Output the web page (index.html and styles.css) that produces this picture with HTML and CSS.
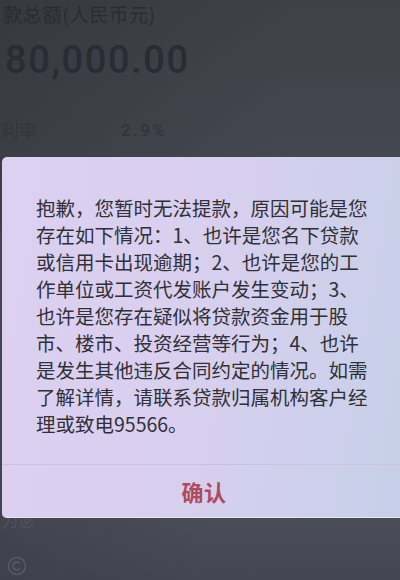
FILE: index.html
```html
<!DOCTYPE html>
<html lang="zh-CN">
<head>
<meta charset="utf-8">
<link rel="stylesheet" href="styles.css">
</head>
<body>
<div class="screen">
  <div class="loan">
    <div class="loan-label">款总额(人民币元)</div>
    <div class="loan-amount">80,000.00</div>
    <div class="loan-rate">
      <span class="rate-name">利率</span>
      <span class="rate-value">2.9%</span>
    </div>
  </div>
  <div class="below">
    <div class="below-text">为您</div>
    <div class="below-icon">
      <svg width="20" height="20" viewBox="0 0 20 20"><circle cx="10" cy="10" r="8.5" fill="none" stroke="#5a5c6b" stroke-width="1.4"/><path d="M13 7.4a4 4 0 1 0 0 5.2" fill="none" stroke="#5a5c6b" stroke-width="1.4"/></svg>
    </div>
  </div>

  <div class="dialog">
    <p class="dialog-msg">抱歉，您暂时无法提款，原因可能是您存在如下情况：1、也许是您名下贷款或信用卡出现逾期；2、也许是您的工作单位或工资代发账户发生变动；3、也许是您存在疑似将贷款资金用于股市、楼市、投资经营等行为；4、也许是发生其他违反合同约定的情况。如需了解详情，请联系贷款归属机构客户经理或致电95566。</p>
    <div class="dialog-foot">
      <span class="dialog-btn">确认</span>
    </div>
  </div>
</div>
</body>
</html>
```

FILE: styles.css
```css
html, body {
  margin: 0;
  padding: 0;
}
body {
  width: 400px;
  height: 580px;
  overflow: hidden;
  font-family: "Noto Sans CJK SC", "Noto Sans", sans-serif;
}
.screen {
  position: relative;
  width: 400px;
  height: 580px;
  overflow: hidden;
  background:
    linear-gradient(100deg, rgba(40,42,48,0.35) 0%, rgba(40,42,48,0) 60%),
    linear-gradient(180deg, #3e4148 0%, #474a53 40%, #555868 130px, #50525f 160px, #4a4c58 520px, #444653 580px);
  display: flex;
  flex-direction: column;
}
.loan {
  color: #2b2d34;
}
.loan-label {
  font-size: 19px;
  line-height: 24px;
  padding-top: 2px;
  padding-left: 3px;
  letter-spacing: 0.8px;
  color: #2a2c32;
}
.loan-amount {
  margin-top: 12px;
  font-family: Roboto, "Liberation Sans", sans-serif;
  font-weight: 500;
  font-size: 38px;
  line-height: 44px;
  letter-spacing: 1.6px;
  padding-left: 5px;
  color: #2a2c33;
}
.loan-rate {
  margin-top: 36px;
  display: flex;
  align-items: center;
  line-height: 24px;
  height: 24px;
}
.rate-name {
  font-size: 18px;
  width: 121px;
  padding-left: 1px;
  box-sizing: border-box;
  color: #33353d;
}
.rate-value {
  font-family: Roboto, "Liberation Sans", sans-serif;
  font-weight: 500;
  font-size: 17px;
  letter-spacing: 2.4px;
  color: #32343e;
}
.below {
  margin-top: auto;
  padding-bottom: 4px;
}
.below-text {
  font-size: 16px;
  line-height: 20px;
  color: #51535f;
  padding-left: 2px;
}
.below-icon {
  margin-top: 26px;
  padding-left: 7px;
  height: 20px;
}
.dialog {
  position: absolute;
  left: 2px;
  top: 157px;
  width: 408px;
  border-radius: 5px 0 0 5px;
  background: linear-gradient(100deg, #ddd0f1 0%, #d9cfef 45%, #cdd0ea 80%, #c5d0e7 100%);
  border-bottom: 1px solid #e4e6ee;
}
.dialog-msg {
  margin: 0;
  padding: 37px 0 0 34px;
  width: 337px;
  font-size: 19.5px;
  line-height: 27px;
  color: #303037;
  word-break: break-all;
}
.dialog-foot {
  margin-top: 27px;
  height: 52px;
  border-top: 1px solid #cbc3dc;
  display: flex;
  align-items: center;
  justify-content: center;
  padding-right: 4px;
}
.dialog-btn {
  font-size: 22px;
  font-weight: 700;
  color: #b04a5e;
  letter-spacing: 0.5px;
}
```
